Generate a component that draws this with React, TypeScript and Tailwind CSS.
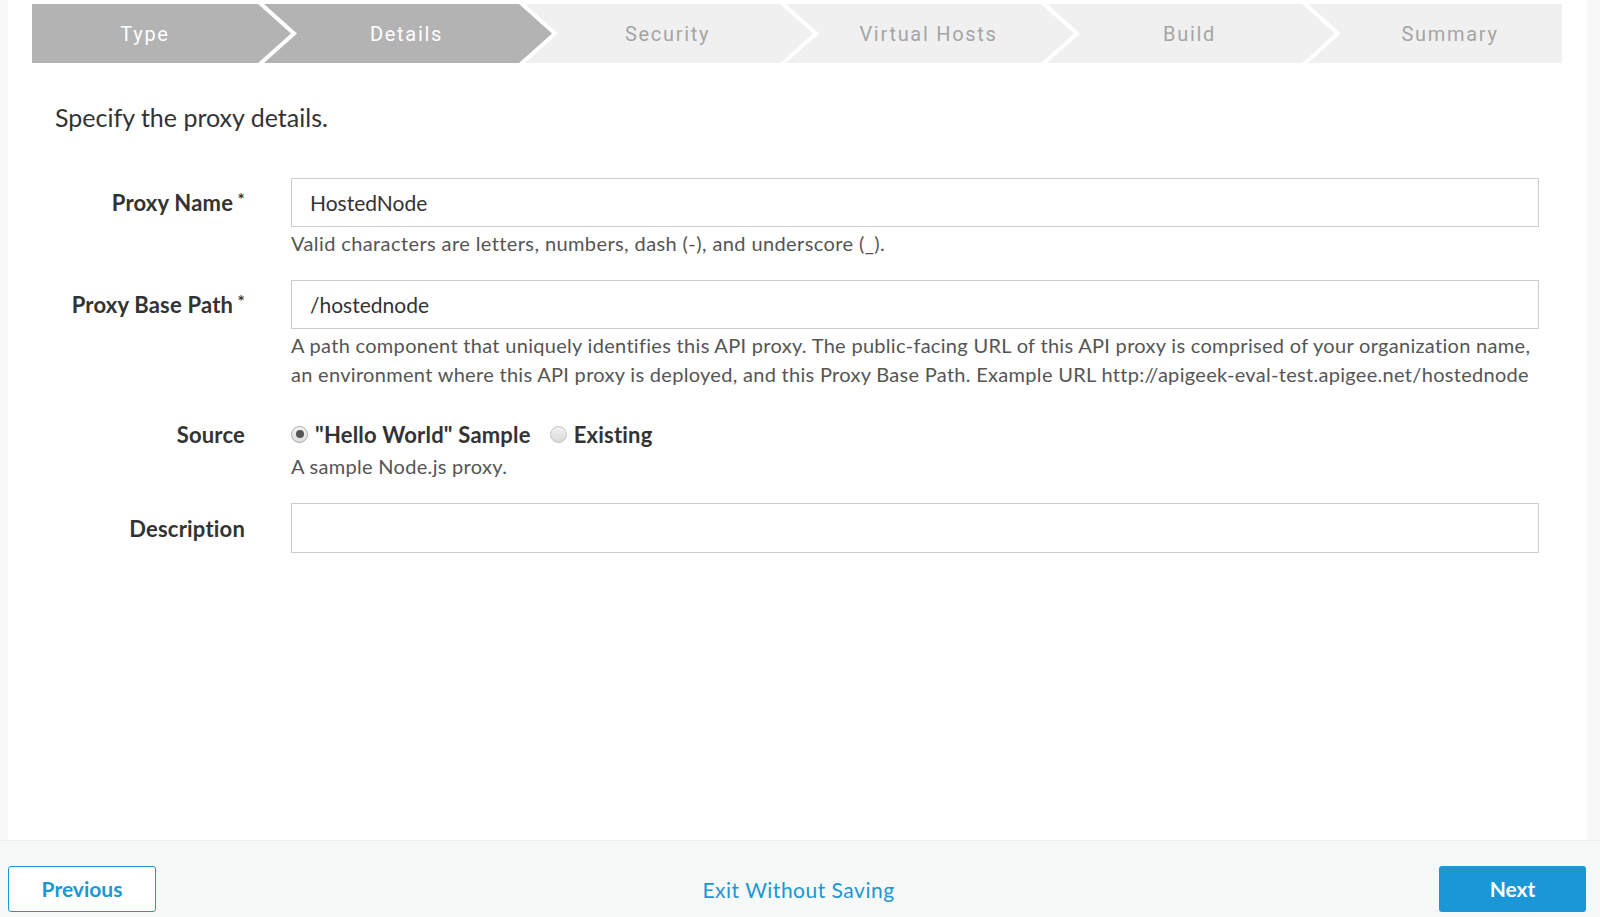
import React from "react";

const steps = ["Type", "Details", "Security", "Virtual Hosts", "Build", "Summary"];

function Step({ label, index, active }: { label: string; index: number; active: boolean }) {
  const first = index === 0;
  const last = index === steps.length - 1;
  let clip = "";
  if (first) clip = "[clip-path:polygon(0_0,calc(100%_-_33px)_0,100%_50%,calc(100%_-_33px)_100%,0_100%)]";
  else if (last) clip = "[clip-path:polygon(0_0,100%_0,100%_100%,0_100%,33px_50%)]";
  else clip = "[clip-path:polygon(0_0,calc(100%_-_33px)_0,100%_50%,calc(100%_-_33px)_100%,0_100%,33px_50%)]";
  const width = first ? "w-[259px]" : last ? "w-[254px]" : "w-[288px]";
  const ml = first ? "" : "ml-[-27px]";
  const pl = first ? "pl-0" : "pl-[30px]";
  const pr = last ? "pr-0" : "pr-[33px]";
  return (
    <div
      className={`${clip} ${width} ${ml} ${pl} ${pr} h-full shrink-0 flex items-center justify-center ${
        active ? "bg-[#b3b3b3] text-white" : "bg-[#f0f0f0] text-[#a5a5a5]"
      }`}
    >
      <span className="text-[20px] tracking-[1.7px]" style={{ fontFamily: "Roboto, 'Liberation Sans', sans-serif" }}>
        {label}
      </span>
    </div>
  );
}

function Label({ children, required }: { children: React.ReactNode; required?: boolean }) {
  return (
    <div className="w-[237px] shrink-0 text-right text-[22px] tracking-[0.2px] font-bold text-[#333]">
      {children}
      {required ? <span className="relative top-[-5px] ml-[4px] text-[18px] font-semibold">*</span> : null}
    </div>
  );
}

function Radio({ checked }: { checked?: boolean }) {
  return checked ? (
    <span className="inline-flex w-[17px] h-[17px] rounded-full border border-[#aaaaaa] bg-gradient-to-b from-[#f4f4f4] to-[#dedede] items-center justify-center">
      <span className="w-[8px] h-[8px] rounded-full bg-[#555]" />
    </span>
  ) : (
    <span className="inline-flex w-[17px] h-[17px] rounded-full border border-[#c4c4c4] bg-gradient-to-b from-[#f2f2f2] to-[#d9d9d9]" />
  );
}

export default function App() {
  return (
    <div
      className="w-[1600px] h-[917px] bg-[#f7f8f8] flex flex-col overflow-hidden"
      style={{ fontFamily: "Lato, 'Open Sans', sans-serif" }}
    >
      <div className="ml-[8px] mr-[13px] h-[840px] bg-white shrink-0 flex flex-col">
        <div className="ml-[24px] mt-[4px] h-[59px] flex">
          {steps.map((s, i) => (
            <Step key={s} label={s} index={i} active={i < 2} />
          ))}
        </div>

        <div className="ml-[47px] mt-[39px] text-[25px] text-[#333] leading-[30px]">Specify the proxy details.</div>

        <div className="mt-[46px] flex flex-col pr-[48px]">
          <div className="flex items-center gap-[46px]">
            <Label required>Proxy Name</Label>
            <div className="flex-1 h-[49px] border border-[#cdcdcd] flex items-center px-[18px] text-[21px] text-[#333]">
              HostedNode
            </div>
          </div>
          <div className="ml-[283px] mt-[2px] text-[20px] tracking-[0.4px] leading-[29px] text-[#555]">
            Valid characters are letters, numbers, dash (-), and underscore (_).
          </div>

          <div className="mt-[22px] flex items-center gap-[46px]">
            <Label required>Proxy Base Path</Label>
            <div className="flex-1 h-[49px] border border-[#cdcdcd] flex items-center px-[18px] text-[21px] text-[#333]">
              /hostednode
            </div>
          </div>
          <div className="ml-[283px] mt-[2px] text-[20px] tracking-[0.3px] leading-[29px] text-[#555] whitespace-nowrap">
            A path component that uniquely identifies this API proxy. The public-facing URL of this API proxy is comprised of your organization name,
            <br />
            an environment where this API proxy is deployed, and this Proxy Base Path. Example URL http://apigeek-eval-test.apigee.net/hostednode
          </div>

          <div className="mt-[29px] flex items-center gap-[46px] h-[32px]">
            <Label>Source</Label>
            <div className="flex items-center text-[22px] tracking-[0.2px] font-bold text-[#333]">
              <Radio checked />
              <span className="ml-[7px]">"Hello World" Sample</span>
              <span className="ml-[19px] flex">
                <Radio />
              </span>
              <span className="ml-[7px]">Existing</span>
            </div>
          </div>
          <div className="ml-[283px] mt-[2px] text-[20px] tracking-[0.3px] leading-[29px] text-[#555]">A sample Node.js proxy.</div>

          <div className="mt-[22px] flex items-center gap-[46px]">
            <Label>Description</Label>
            <div className="flex-1 h-[50px] border border-[#cdcdcd]" />
          </div>
        </div>
      </div>

      <div className="border-t border-[#ededed] flex-1 flex items-start justify-between pl-[8px] pr-[14px] pt-[25px]">
        <button className="w-[148px] h-[46px] rounded-[3px] border border-[#1a97d5] bg-white text-[#1a97d5] text-[21px] font-bold">
          Previous
        </button>
        <span className="mt-[8px] ml-[2px] text-[21px] text-[#1a97d5] tracking-[0.5px]">Exit Without Saving</span>
        <button className="w-[147px] h-[46px] rounded-[3px] bg-[#1a97d5] text-white text-[21px] font-bold">Next</button>
      </div>
    </div>
  );
}
